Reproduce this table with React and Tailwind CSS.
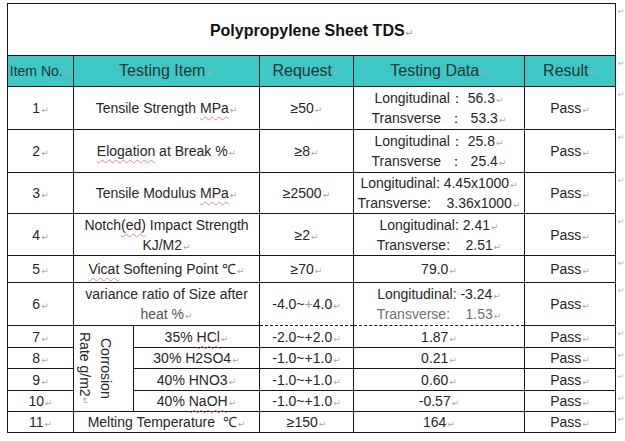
import React from "react";

const Mark = () => (
  <span className="text-[9px] leading-[0] text-[#a9a9a9] font-['DejaVu_Sans'] ml-px">↵</span>
);

const Sp = ({ children }) => (
  <span className="underline decoration-wavy decoration-[#e08a8a] decoration-1 underline-offset-[3px]">
    {children}
  </span>
);

const rows = [
  {
    no: "1",
    item: <>Tensile Strength <Sp>MPa</Sp></>,
    req: "≥50",
    data: ["Longitudinal： 56.3", "Transverse  ：  53.3"],
    h: "h-[43px]",
  },
  {
    no: "2",
    item: <><Sp>Elogation</Sp> at Break %</>,
    req: "≥8",
    data: ["Longitudinal： 25.8", "Transverse  ：  25.4"],
    h: "h-[43px]",
  },
  {
    no: "3",
    item: <>Tensile Modulus <Sp>MPa</Sp></>,
    req: "≥2500",
    data: ["Longitudinal: 4.45x1000", "Transverse:    3.36x1000"],
    h: "h-[41px]",
  },
  {
    no: "4",
    item: <>Notch<Sp>(ed)</Sp> Impact Strength<br />KJ/M2</>,
    req: "≥2",
    data: ["Longitudinal: 2.41", "Transverse:    2.51"],
    h: "h-[42px]",
  },
  {
    no: "5",
    item: <><Sp>Vicat</Sp> Softening Point ℃</>,
    req: "≥70",
    data: ["79.0"],
    h: "h-[27px]",
  },
];

const corrosion = [
  { no: "7", chem: <>35% <Sp>HCl</Sp></>, req: "-2.0~+2.0", data: "1.87", h: "h-[22px]" },
  { no: "8", chem: "30% H2SO4", req: "-1.0~+1.0", data: "0.21", h: "h-[21px]" },
  { no: "9", chem: "40% HNO3", req: "-1.0~+1.0", data: "0.60", h: "h-[22px]" },
  { no: "10", chem: <>40% <Sp>NaOH</Sp></>, req: "-1.0~+1.0", data: "-0.57", h: "h-[21px]" },
];

const cell = "border border-[#151515] text-center align-middle p-0";
const outside = "align-top pt-[4px] pl-[2px] text-[8px] text-[#b5b5b5] font-['DejaVu_Sans'] leading-none";

export default function App() {
  return (
    <div className="min-h-screen bg-white pl-[7px] pt-[3px] font-['Liberation_Sans',Arial,sans-serif] text-[14px] leading-[18px] text-[#262626]">
      <table className="table-fixed border-collapse w-[618px]">
        <colgroup>
          <col className="w-[66px]" />
          <col className="w-[60px]" />
          <col className="w-[126px]" />
          <col className="w-[94px]" />
          <col className="w-[171px]" />
          <col className="w-[91px]" />
          <col className="w-[10px]" />
        </colgroup>
        <tbody>
          {/* Title */}
          <tr className="h-[52px]">
            <td colSpan={6} className={`${cell} pt-[3px] font-bold text-[16px] text-[#111]`}>
              Polypropylene Sheet TDS<Mark />
            </td>
            <td className={outside}>↵</td>
          </tr>

          {/* Header */}
          <tr className="h-[31px] bg-[#3ec8c5] text-[#1f3535]">
            <td className={`${cell} text-[14px]`}>Item No.<Mark /></td>
            <td colSpan={2} className={`${cell} text-[16px]`}>Testing Item<Mark /></td>
            <td className={`${cell} text-[16px]`}>Request<Mark /></td>
            <td className={`${cell} text-[16px]`}>Testing Data<Mark /></td>
            <td className={`${cell} text-[16px]`}>Result<Mark /></td>
            <td className={`${outside} bg-white`}>↵</td>
          </tr>

          {rows.map((r) => (
            <tr key={r.no} className={r.h}>
              <td className={cell}>{r.no}<Mark /></td>
              <td colSpan={2} className={`${cell} leading-[20px]`}>{r.item}<Mark /></td>
              <td className={cell}>{r.req}<Mark /></td>
              <td className={`${cell} leading-[20px]`}>
                {r.data.map((line, i) => (
                  <div key={i} className="whitespace-pre">
                    {line}
                    <Mark />
                  </div>
                ))}
              </td>
              <td className={cell}>Pass<Mark /></td>
              <td className={outside}>↵</td>
            </tr>
          ))}

          {/* Row 6 */}
          <tr className="h-[43px]">
            <td className={cell}>6<Mark /></td>
            <td colSpan={2} className={`${cell} leading-[20px]`}>
              variance ratio of Size after<br />
              <span className="text-[#555]">heat %</span>
              <Mark />
            </td>
            <td className={`${cell} [border-bottom-style:dashed]`}>
              -4.0~<span className="text-[#999]">+</span>4.0<Mark />
            </td>
            <td className={`${cell} leading-[20px] [border-bottom-style:dashed]`}>
              <div className="whitespace-pre">Longitudinal: -3.24<Mark /></div>
              <div className="whitespace-pre text-[#707070]">Transverse:    1.53<Mark /></div>
            </td>
            <td className={cell}>Pass<Mark /></td>
            <td className={outside}>↵</td>
          </tr>

          {corrosion.map((r, i) => (
            <tr key={r.no} className={r.h}>
              <td className={cell}>{r.no}<Mark /></td>
              {i === 0 && (
                <td rowSpan={4} className={cell}>
                  <div className="mx-auto whitespace-nowrap text-center [writing-mode:vertical-rl] leading-[21px]">
                    Corrosion
                    <br />
                    Rate g/m2<Mark />
                  </div>
                </td>
              )}
              <td className={cell}>{r.chem}<Mark /></td>
              <td className={`${cell} ${i === 0 ? "[border-top-style:dashed]" : ""}`}>{r.req}<Mark /></td>
              <td className={`${cell} ${i === 0 ? "[border-top-style:dashed]" : ""}`}>{r.data}<Mark /></td>
              <td className={cell}>Pass<Mark /></td>
              <td className={outside}>↵</td>
            </tr>
          ))}

          {/* Row 11 */}
          <tr className="h-[21px]">
            <td className={cell}>11<Mark /></td>
            <td colSpan={2} className={`${cell} whitespace-pre`}>Melting Temperature  ℃<Mark /></td>
            <td className={cell}>≥150<Mark /></td>
            <td className={cell}>164<Mark /></td>
            <td className={cell}>Pass<Mark /></td>
            <td className={outside}>↵</td>
          </tr>
        </tbody>
      </table>
    </div>
  );
}
